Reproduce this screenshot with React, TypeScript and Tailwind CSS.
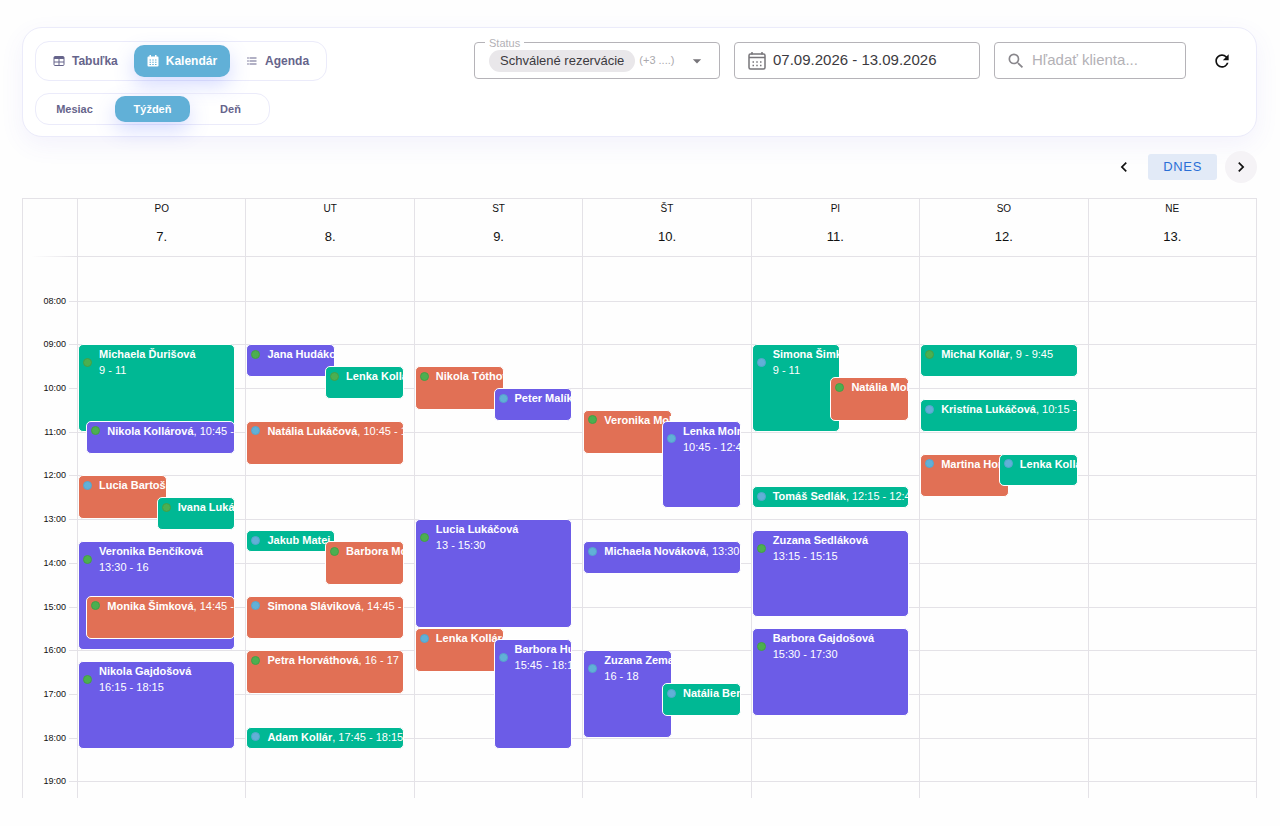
import { useState } from "react";
import clsx from "clsx";
import { MdArrowDropDown, MdChevronLeft, MdChevronRight, MdFormatListBulleted, MdRefresh, MdSearch } from "react-icons/md";

type Tone = "green" | "purple" | "orange";
type Slot = "full" | "left" | "right" | "nested";

interface Booking {
    name: string;
    from: number;
    to: number;
    tone: Tone;
    dot: "green" | "blue";
    slot: Slot;
}

interface Day {
    label: string;
    date: string;
    bookings: Booking[];
}

const FIRST_HOUR = 7;
const HOURS = [7, 8, 9, 10, 11, 12, 13, 14, 15, 16, 17, 18, 19];

const tones: Record<Tone, string> = {
    green: "bg-[#00b894]",
    purple: "bg-[#6c5ce7]",
    orange: "bg-[#e17055]"
};

const slots: Record<Slot, string> = {
    full: "left-0 w-[94%]",
    left: "left-0 w-[53%]",
    right: "left-[47%] w-[47%]",
    nested: "left-[5%] w-[89%]"
};

const days: Day[] = [
    {
        label: "PO",
        date: "7.",
        bookings: [
            { name: "Michaela Ďurišová", from: 9, to: 11, tone: "green", dot: "green", slot: "full" },
            { name: "Nikola Kollárová", from: 10.75, to: 11.5, tone: "purple", dot: "green", slot: "nested" },
            { name: "Lucia Bartošová", from: 12, to: 13, tone: "orange", dot: "blue", slot: "left" },
            { name: "Ivana Lukáčová", from: 12.5, to: 13.25, tone: "green", dot: "green", slot: "right" },
            { name: "Veronika Benčíková", from: 13.5, to: 16, tone: "purple", dot: "green", slot: "full" },
            { name: "Monika Šimková", from: 14.75, to: 15.75, tone: "orange", dot: "green", slot: "nested" },
            { name: "Nikola Gajdošová", from: 16.25, to: 18.25, tone: "purple", dot: "green", slot: "full" }
        ]
    },
    {
        label: "UT",
        date: "8.",
        bookings: [
            { name: "Jana Hudáková", from: 9, to: 9.75, tone: "purple", dot: "green", slot: "left" },
            { name: "Lenka Kollárová", from: 9.5, to: 10.25, tone: "green", dot: "green", slot: "right" },
            { name: "Natália Lukáčová", from: 10.75, to: 11.75, tone: "orange", dot: "blue", slot: "full" },
            { name: "Jakub Matej", from: 13.25, to: 13.75, tone: "green", dot: "blue", slot: "left" },
            { name: "Barbora Molnárová", from: 13.5, to: 14.5, tone: "orange", dot: "green", slot: "right" },
            { name: "Simona Sláviková", from: 14.75, to: 15.75, tone: "orange", dot: "blue", slot: "full" },
            { name: "Petra Horváthová", from: 16, to: 17, tone: "orange", dot: "green", slot: "full" },
            { name: "Adam Kollár", from: 17.75, to: 18.25, tone: "green", dot: "blue", slot: "full" }
        ]
    },
    {
        label: "ST",
        date: "9.",
        bookings: [
            { name: "Nikola Tóthová", from: 9.5, to: 10.5, tone: "orange", dot: "green", slot: "left" },
            { name: "Peter Malík", from: 10, to: 10.75, tone: "purple", dot: "blue", slot: "right" },
            { name: "Lucia Lukáčová", from: 13, to: 15.5, tone: "purple", dot: "green", slot: "full" },
            { name: "Lenka Kollárová", from: 15.5, to: 16.5, tone: "orange", dot: "blue", slot: "left" },
            { name: "Barbora Hudáková", from: 15.75, to: 18.25, tone: "purple", dot: "blue", slot: "right" }
        ]
    },
    {
        label: "ŠT",
        date: "10.",
        bookings: [
            { name: "Veronika Molnárová", from: 10.5, to: 11.5, tone: "orange", dot: "green", slot: "left" },
            { name: "Lenka Molnárová", from: 10.75, to: 12.75, tone: "purple", dot: "blue", slot: "right" },
            { name: "Michaela Nováková", from: 13.5, to: 14.25, tone: "purple", dot: "blue", slot: "full" },
            { name: "Zuzana Zemanová", from: 16, to: 18, tone: "purple", dot: "blue", slot: "left" },
            { name: "Natália Benčíková", from: 16.75, to: 17.5, tone: "green", dot: "blue", slot: "right" }
        ]
    },
    {
        label: "PI",
        date: "11.",
        bookings: [
            { name: "Simona Šimková", from: 9, to: 11, tone: "green", dot: "blue", slot: "left" },
            { name: "Natália Molnárová", from: 9.75, to: 10.75, tone: "orange", dot: "green", slot: "right" },
            { name: "Tomáš Sedlák", from: 12.25, to: 12.75, tone: "green", dot: "blue", slot: "full" },
            { name: "Zuzana Sedláková", from: 13.25, to: 15.25, tone: "purple", dot: "green", slot: "full" },
            { name: "Barbora Gajdošová", from: 15.5, to: 17.5, tone: "purple", dot: "green", slot: "full" }
        ]
    },
    {
        label: "SO",
        date: "12.",
        bookings: [
            { name: "Michal Kollár", from: 9, to: 9.75, tone: "green", dot: "green", slot: "full" },
            { name: "Kristína Lukáčová", from: 10.25, to: 11, tone: "green", dot: "blue", slot: "full" },
            { name: "Martina Horváthová", from: 11.5, to: 12.5, tone: "orange", dot: "blue", slot: "left" },
            { name: "Lenka Kollárová", from: 11.5, to: 12.25, tone: "green", dot: "blue", slot: "right" }
        ]
    },
    { label: "NE", date: "13.", bookings: [] }
];

function formatTime(value: number) {
    const hour = Math.floor(value);
    const minutes = Math.round((value - hour) * 60);
    return minutes === 0 ? `${hour}` : `${hour}:${minutes}`;
}

function BookingCard({ booking }: { booking: Booking }) {
    const { name, from, to, tone, dot, slot } = booking;
    const tall = to - from >= 2;
    const time = `${formatTime(from)} - ${formatTime(to)}`;

    return (
        <button
            type="button"
            className={clsx(
                "absolute flex items-start overflow-hidden rounded-[5px] border border-white text-left",
                tones[tone],
                slots[slot]
            )}
            style={{
                top: `${((from - FIRST_HOUR) / HOURS.length) * 100}%`,
                height: `${((to - from) / HOURS.length) * 100}%`
            }}
        >
            <span className="flex items-center gap-[7px] pt-px pl-1 text-[11px] leading-4 whitespace-nowrap text-white">
                <span
                    className={clsx(
                        "size-[9px] shrink-0 rounded-full border",
                        dot === "green" ? "border-[#43a047] bg-[#4caf50]" : "border-[#56a5cc] bg-[#61b0d7]"
                    )}
                />
                <span>
                    <b>{name}</b>
                    {tall ? <span className="block">{time}</span> : <span>, {time}</span>}
                </span>
            </span>
        </button>
    );
}

function TableIcon() {
    return (
        <svg viewBox="0 0 24 24" className="size-3" fill="none" stroke="currentColor" strokeWidth="2" aria-hidden="true">
            <rect x="2" y="3" width="20" height="18" rx="2" />
            <path d="M2 6h20" strokeWidth="4" />
            <path d="M2 14h20M12 6v15" />
        </svg>
    );
}

function CalendarIcon() {
    return (
        <svg viewBox="0 0 24 24" className="size-3" fill="currentColor" aria-hidden="true">
            <path
                fillRule="evenodd"
                d="M5 0h3v3h8V0h3v3h2a2 2 0 0 1 2 2v16a2 2 0 0 1-2 2H3a2 2 0 0 1-2-2V5a2 2 0 0 1 2-2h2zM5 9v2h3V9zm5.500 0v2h3V9zM16 9v2h3V9zM5 13.500v2h3v-2zm5.500 0v2h3v-2zm5.500 0v2h3v-2zM5 18v2h3v-2zm5.500 0v2h3v-2zm5.500 0v2h3v-2z"
            />
        </svg>
    );
}

function DateRangeIcon() {
    return (
        <svg viewBox="0 0 20 20" className="size-5 shrink-0 text-[#77757a]" fill="none" stroke="currentColor" aria-hidden="true">
            <rect x="2" y="3" width="16" height="15" rx="1.500" strokeWidth="1.500" />
            <path d="M2 6.500h16M5 1v2.500M15 1v2.500" strokeWidth="1.500" />
            <path d="M5.500 11H7M9.250 11h1.500M13 11h1.500M5.500 14.500H7M9.250 14.500h1.500M13 14.500h1.500" strokeWidth="1.500" />
        </svg>
    );
}

const views = [
    { name: "Tabuľka", icon: <TableIcon /> },
    { name: "Kalendár", icon: <CalendarIcon /> },
    { name: "Agenda", icon: <MdFormatListBulleted className="size-3" /> }
];

const ranges = ["Mesiac", "Týždeň", "Deň"];

const activeTab = "bg-[#61b0d7] text-white shadow-[0_8px_20px_rgba(92,110,255,0.25)]";

export default function App() {
    const [view, setView] = useState("Kalendár");
    const [range, setRange] = useState("Týždeň");

    return (
        <main className="flex h-screen flex-col bg-[#fefefe] pt-[27px] pr-[23px] pb-7 pl-[22px] font-['Liberation_Sans',Arial,sans-serif] text-[#111]">
            <header className="flex shrink-0 items-start justify-between rounded-[20px] border border-[#ebebfa] bg-white pt-[13px] pr-5 pb-[11px] pl-3 shadow-[0_8px_24px_rgba(100,90,230,0.07)]">
                <div className="flex flex-col items-start gap-3">
                    <nav className="flex h-10 items-center gap-[3px] rounded-[14px] border border-[#ebebfa] px-1">
                        {views.map((item) => (
                            <button
                                key={item.name}
                                type="button"
                                onClick={() => setView(item.name)}
                                className={clsx(
                                    "flex h-8 items-center gap-[7px] rounded-[10px] px-[13px] text-xs font-bold",
                                    view === item.name ? activeTab : "text-[#66648b]"
                                )}
                            >
                                {item.icon}
                                {item.name}
                            </button>
                        ))}
                    </nav>
                    <nav className="flex h-8 items-center gap-[3px] rounded-[14px] border border-[#ebebfa] px-px">
                        {ranges.map((item) => (
                            <button
                                key={item}
                                type="button"
                                onClick={() => setRange(item)}
                                className={clsx(
                                    "h-[26px] min-w-[75px] rounded-[10px] px-[18px] text-[11px] font-bold",
                                    range === item ? activeTab : "text-[#66648b]"
                                )}
                            >
                                {item}
                            </button>
                        ))}
                    </nav>
                </div>

                <div className="flex items-center gap-[14px]">
                    <div className="relative flex h-[39px] w-[246px] items-center">
                        <button
                            type="button"
                            aria-label="Status"
                            className="flex h-[37px] w-full items-center rounded-[4px] border border-[#b5b3b8] pr-3 pl-[14px]"
                        >
                            <span className="rounded-full bg-[#e9e7ea] px-[11px] text-[13px] leading-[22px] text-[#3c3a40]">Schválené rezervácie</span>
                            <span className="pl-1 text-[11px] text-[#aaa8ad]">(+3 ....)</span>
                            <MdArrowDropDown className="ml-auto size-5 text-[#77757a]" />
                        </button>
                        <span className="absolute -top-1 left-[11px] bg-white px-1 text-[11px] leading-3 text-[#b3b1b6]">Status</span>
                    </div>
                    <label className="flex h-[37px] w-[246px] items-center gap-[6px] rounded-[4px] border border-[#b5b3b8] pl-3">
                        <DateRangeIcon />
                        <input aria-label="Obdobie" defaultValue="07.09.2026 - 13.09.2026" className="w-full min-w-0 text-[15px] text-[#3c3a40] outline-none" />
                    </label>
                    <label className="flex h-[37px] w-[192px] items-center gap-[6px] rounded-[4px] border border-[#b5b3b8] pl-[11px]">
                        <MdSearch className="size-5 shrink-0 text-[#89878c]" />
                        <input aria-label="Hľadať klienta" placeholder="Hľadať klienta..." className="w-full min-w-0 text-[15px] outline-none placeholder:text-[#b3b1b6]" />
                    </label>
                    <button type="button" aria-label="Obnoviť" className="ml-2 p-1">
                        <MdRefresh className="size-5" />
                    </button>
                </div>
            </header>

            <div className="flex shrink-0 items-center justify-end pt-[14px] pb-[15px]">
                <button type="button" aria-label="Predchádzajúci týždeň" className="flex size-8 items-center justify-center rounded-full">
                    <MdChevronLeft className="size-5" />
                </button>
                <button type="button" className="mx-2 h-[26px] rounded-[3px] bg-[#e2eaf7] px-[15px] text-[13px] tracking-wider text-[#2a6fd6]">
                    DNES
                </button>
                <button type="button" aria-label="Nasledujúci týždeň" className="flex size-8 items-center justify-center rounded-full bg-[#f5f3f6]">
                    <MdChevronRight className="size-5" />
                </button>
            </div>

            <section className="flex min-h-0 flex-1 flex-col overflow-hidden border-x border-t border-[#e4e2e7]">
                <div className="grid shrink-0 grid-cols-[54px_repeat(7,1fr)]">
                    <div className="flex flex-col justify-end">
                        <div className="ml-2 h-px bg-linear-to-r from-transparent to-[#e4e2e7]" />
                    </div>
                    {days.map((day) => (
                        <div key={day.label} className="flex h-[58px] flex-col items-center border-b border-l border-[#e4e2e7] pt-1">
                            <span className="text-[10px] leading-3">{day.label}</span>
                            <span className="pt-3 text-[13px] leading-5">{day.date}</span>
                        </div>
                    ))}
                </div>

                <div className="grid h-[568px] shrink-0 grid-cols-[54px_repeat(7,1fr)]">
                    <div className="grid grid-rows-[repeat(13,1fr)]">
                        {HOURS.map((hour) => (
                            <div key={hour} className="flex items-start">
                                {hour > FIRST_HOUR && (
                                    <>
                                        <span className="-mt-[6px] w-[43px] text-right text-[9px] leading-3">{String(hour).padStart(2, "0")}:00</span>
                                        <span className="ml-auto h-px w-2 bg-[#e4e2e7]" />
                                    </>
                                )}
                            </div>
                        ))}
                    </div>
                    {days.map((day) => (
                        <div key={day.label} className="relative grid grid-rows-[repeat(13,1fr)] border-l border-[#e4e2e7]">
                            {HOURS.map((hour) => (
                                <div key={hour} className={clsx(hour > FIRST_HOUR && "border-t border-[#e4e2e7]")} />
                            ))}
                            {day.bookings.map((booking) => (
                                <BookingCard key={booking.name} booking={booking} />
                            ))}
                        </div>
                    ))}
                </div>
            </section>
        </main>
    );
}
